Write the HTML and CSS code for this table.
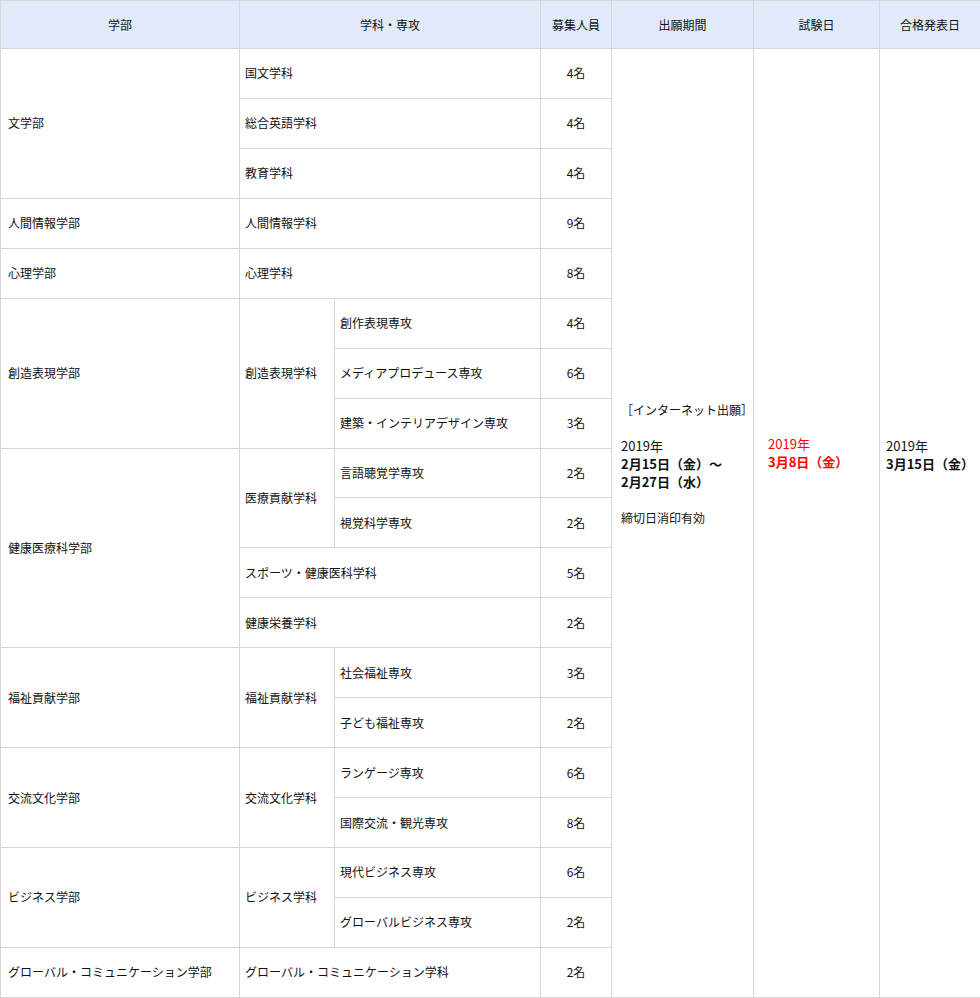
FILE: index.html
```html
<!DOCTYPE html>
<html lang="ja">
<head>
<meta charset="utf-8">
<title>募集人員・日程</title>
<link rel="stylesheet" href="styles.css">
</head>
<body>
<table class="schedule">
  <colgroup>
    <col class="c-faculty">
    <col class="c-dept">
    <col class="c-major">
    <col class="c-num">
    <col class="c-apply">
    <col class="c-exam">
    <col class="c-result">
  </colgroup>
  <thead>
    <tr>
      <th>学部</th>
      <th colspan="2">学科・専攻</th>
      <th>募集人員</th>
      <th>出願期間</th>
      <th>試験日</th>
      <th>合格発表日</th>
    </tr>
  </thead>
  <tbody>
    <tr>
      <td rowspan="3" class="faculty">文学部</td>
      <td colspan="2">国文学科</td>
      <td class="num">4名</td>
      <td rowspan="19" class="apply">
        <p class="note">［インターネット出願］</p>
        <p class="date">2019年<br><b>2月15日（金）～<br>2月27日（水）</b></p>
        <p class="note">締切日消印有効</p>
      </td>
      <td rowspan="19" class="exam">
        <p class="date red">2019年<br><b>3月8日（金）</b></p>
      </td>
      <td rowspan="19" class="result">
        <p class="date">2019年<br><b>3月15日（金）</b></p>
      </td>
    </tr>
    <tr><td colspan="2">総合英語学科</td><td class="num">4名</td></tr>
    <tr><td colspan="2">教育学科</td><td class="num">4名</td></tr>
    <tr><td class="faculty">人間情報学部</td><td colspan="2">人間情報学科</td><td class="num">9名</td></tr>
    <tr><td class="faculty">心理学部</td><td colspan="2">心理学科</td><td class="num">8名</td></tr>
    <tr><td rowspan="3" class="faculty">創造表現学部</td><td rowspan="3">創造表現学科</td><td>創作表現専攻</td><td class="num">4名</td></tr>
    <tr><td>メディアプロデュース専攻</td><td class="num">6名</td></tr>
    <tr><td>建築・インテリアデザイン専攻</td><td class="num">3名</td></tr>
    <tr><td rowspan="4" class="faculty">健康医療科学部</td><td rowspan="2">医療貢献学科</td><td>言語聴覚学専攻</td><td class="num">2名</td></tr>
    <tr><td>視覚科学専攻</td><td class="num">2名</td></tr>
    <tr><td colspan="2">スポーツ・健康医科学科</td><td class="num">5名</td></tr>
    <tr><td colspan="2">健康栄養学科</td><td class="num">2名</td></tr>
    <tr><td rowspan="2" class="faculty">福祉貢献学部</td><td rowspan="2">福祉貢献学科</td><td>社会福祉専攻</td><td class="num">3名</td></tr>
    <tr><td>子ども福祉専攻</td><td class="num">2名</td></tr>
    <tr><td rowspan="2" class="faculty">交流文化学部</td><td rowspan="2">交流文化学科</td><td>ランゲージ専攻</td><td class="num">6名</td></tr>
    <tr><td>国際交流・観光専攻</td><td class="num">8名</td></tr>
    <tr><td rowspan="2" class="faculty">ビジネス学部</td><td rowspan="2">ビジネス学科</td><td>現代ビジネス専攻</td><td class="num">6名</td></tr>
    <tr><td>グローバルビジネス専攻</td><td class="num">2名</td></tr>
    <tr><td class="faculty">グローバル・コミュニケーション学部</td><td colspan="2">グローバル・コミュニケーション学科</td><td class="num">2名</td></tr>
  </tbody>
</table>
</body>
</html>
```
FILE: styles.css
```css
html, body {
  margin: 0;
  padding: 0;
  background: #fff;
}
body {
  font-family: "Noto Sans CJK JP", "Noto Sans", sans-serif;
  font-size: 12px;
  color: #111;
}
.schedule {
  width: 980px;
  table-layout: fixed;
  border-collapse: collapse;
}
.c-faculty { width: 239px; }
.c-dept { width: 95px; }
.c-major { width: 206px; }
.c-num { width: 71px; }
.c-apply { width: 142px; }
.c-exam { width: 126px; }
.c-result { width: 101px; }

.schedule th,
.schedule td {
  border: 1px solid #d7d7d7;
  padding: 0 5px;
  font-weight: normal;
  line-height: 18px;
  vertical-align: middle;
  text-align: left;
}
.schedule thead tr { height: 48px; }
.schedule th {
  background: #e1eaf8;
  text-align: center;
}
.schedule tbody tr { height: 49.95px; }
.schedule td.faculty { padding-left: 7px; }
.schedule td.num { text-align: center; }

.schedule td.apply,
.schedule td.exam,
.schedule td.result {
  vertical-align: top;
}
.schedule td.apply { padding-left: 9px; padding-top: 352px; }
.schedule td.exam { padding-left: 14px; padding-top: 386px; }
.schedule td.result { padding-left: 6px; padding-top: 388px; }

.note, .date { margin: 0; }
.apply .note + .date { margin-top: 18px; }
.apply .date + .note { margin-top: 18px; }
.date {
  font-size: 13px;
  line-height: 18px;
}
.date b { font-weight: bold; }
.red { color: #ff0000; }
```
